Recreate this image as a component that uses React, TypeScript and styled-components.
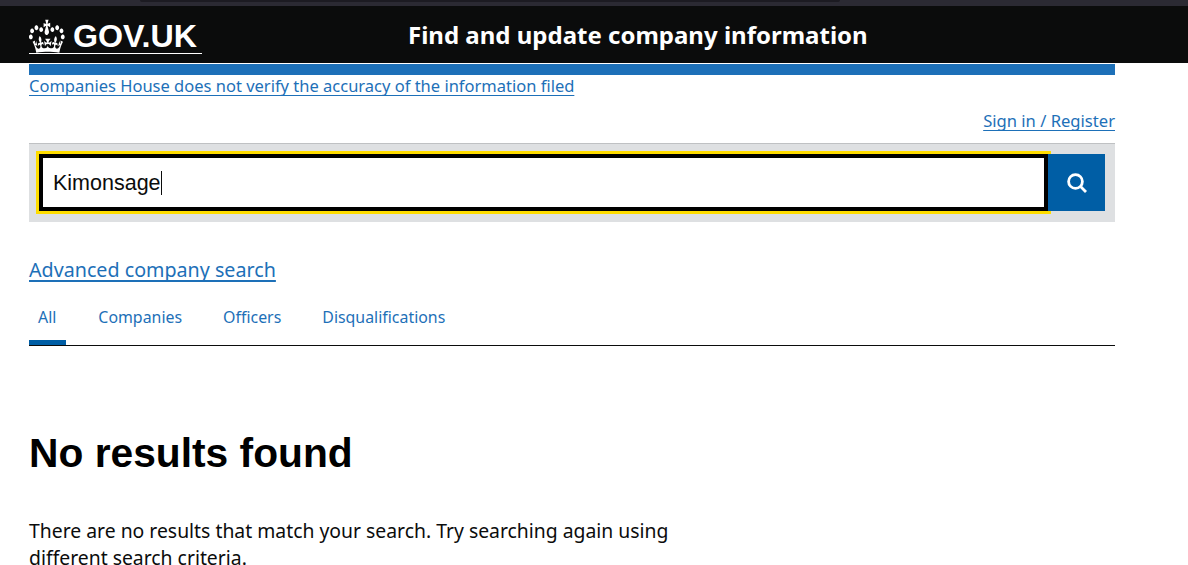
import { createGlobalStyle, styled } from "styled-components";

const GlobalStyle = createGlobalStyle`
	html, body {
		margin: 0;
		padding: 0;
		background: #fff;
		overflow: hidden;
	}
	body {
		font-family: "Noto Sans", sans-serif;
		color: #0b0c0c;
	}
`;

const Page = styled.div`
	width: 1188px;
	height: 565px;
	overflow: hidden;
`;

const TopStrip = styled.div`
	height: 6px;
	background: #2b2a33;
`;

const BrowserTab = styled.div`
	width: 700px;
	height: 2px;
	margin-left: 140px;
	background: #1c1b22;
	border-radius: 0 0 3px 3px;
`;

const Header = styled.header`
	height: 57px;
	background: #0b0c0c;
	padding-left: 29px;
	display: flex;
	align-items: center;
	margin-bottom: 1px;
`;

const LogoLink = styled.a`
	width: 173px;
	height: 36px;
	display: flex;
	align-items: center;
	gap: 8px;
	color: #fff;
	border-bottom: 1px solid #fff;
	box-sizing: border-box;
	margin-top: 3px;
`;

const LogoText = styled.span`
	font-family: "Liberation Sans", sans-serif;
	font-weight: 700;
	font-size: 32.2px;
	line-height: 36px;
`;

const ServiceName = styled.div`
	margin-left: 206px;
	color: #fff;
	font-weight: 700;
	font-size: 24px;
	line-height: 36px;
	font-family: "Noto Sans", sans-serif;
`;

const Wrapper = styled.main`
	width: 1086px;
	margin-left: 29px;
`;

const BlueBar = styled.div`
	height: 11px;
	background: #1d70b8;
`;

const Notice = styled.a`
	display: block;
	width: fit-content;
	color: #1d70b8;
	font-size: 16.5px;
	line-height: 21px;
	text-decoration: underline;
	text-decoration-skip-ink: none;
	text-underline-offset: 3px;
`;

const AccountRow = styled.div`
	display: flex;
	justify-content: flex-end;
	margin-top: 14px;
`;

const AccountLink = styled(Notice)`
	font-size: 16.6px;
`;

const SearchPanel = styled.form`
	margin-top: 12px;
	height: 79px;
	box-sizing: border-box;
	border-top: 1px solid #bfc1c3;
	background: #dee0e2;
	padding: 10px 10px 11px 10px;
	display: flex;
`;

const SearchInput = styled.div`
	flex: 1;
	box-sizing: border-box;
	height: 57px;
	border: 4px solid #000;
	outline: 3px solid #ffdd00;
	background: #fff;
	padding: 1px 0 0 10px;
	font-family: "Liberation Sans", sans-serif;
	font-size: 21.5px;
	display: flex;
	align-items: center;
	color: #0b0c0c;
`;

const Caret = styled.span`
	width: 1px;
	height: 24px;
	background: #0b0c0c;
`;

const SearchButton = styled.button`
	position: relative;
	width: 57px;
	height: 57px;
	border: 0;
	padding: 0;
	background: #005ea5;
	display: flex;
	align-items: center;
	justify-content: center;
`;

const AdvancedLink = styled(Notice)`
	margin-top: 35px;
	font-size: 19.7px;
	line-height: 26px;
	text-decoration-thickness: 2px;
`;

const Tabs = styled.nav`
	margin-top: 19px;
	height: 43px;
	border-bottom: 1px solid #0b0c0c;
	display: flex;
	gap: 41px;
`;

const Tab = styled.a<{ $active?: boolean }>`
	height: 43px;
	box-sizing: border-box;
	padding: 3px ${(p) => (p.$active ? "10px" : "0")} 0 ${(p) => (p.$active ? "9px" : "0")};
	margin-right: ${(p) => (p.$active ? "-9px" : "0")};
	border-bottom: ${(p) => (p.$active ? "5px solid #005ea5" : "0")};
	color: #1d70b8;
	font-size: 15.9px;
	line-height: 24px;
`;

const Heading = styled.h1`
	margin: 84px 0 0;
	font-family: "Liberation Sans", sans-serif;
	font-weight: 700;
	font-size: 40.75px;
	line-height: 46px;
	color: #000;
`;

const Body = styled.p`
	margin: 41px 0 0;
	width: 680px;
	font-size: 19.36px;
	line-height: 27px;
	color: #0b0c0c;
`;

function Crown() {
	return (
		<svg width="36" height="34" viewBox="0 3.500 36 27" preserveAspectRatio="none" fill="#fff">
			<path d="M6.700 12.200c1 .4 2.100-.1 2.500-1s-.1-2.100-1-2.500c-1-.4-2.100.1-2.500 1-.4 1 0 2.100 1 2.500m-4.300 2.500c1 .4 2.100-.1 2.500-1s-.1-2.100-1-2.500c-1-.4-2.100.1-2.500 1-.5 1 0 2.100 1 2.500m-1.300 4.800c1 .4 2.100-.1 2.500-1 .4-1-.1-2.100-1-2.500-1-.4-2.100.1-2.500 1-.4 1 0 2.100 1 2.500m10.400-5.800c1 .4 2.100-.1 2.500-1s-.1-2.100-1-2.500c-1-.4-2.100.1-2.500 1s0 2.100 1 2.500m17.400-1.500c-1 .4-2.100-.1-2.500-1s.1-2.100 1-2.500c1-.4 2.100.1 2.500 1 .5 1 0 2.100-1 2.500m4.300 2.500c-1 .4-2.100-.1-2.500-1s.1-2.100 1-2.500c1-.4 2.100.1 2.500 1 .5 1 0 2.100-1 2.500m1.300 4.800c-1 .4-2.100-.1-2.500-1-.4-1 .1-2.100 1-2.500 1-.4 2.100.1 2.500 1 .4 1 0 2.100-1 2.500m-10.400-5.800c-1 .4-2.100-.1-2.500-1s.1-2.100 1-2.500c1-.4 2.100.1 2.500 1s0 2.100-1 2.500m-5.300-4.900 2.400 1.300V6.500l-2.400.8c-.1-.1-.1-.2-.2-.2s1-3 1-3h-3.400l1 3c-.1.1-.2.1-.2.2-.1.1-2.400-.7-2.400-.7v3.500L17 8.800c-.1.1 0 .2.1.3l-1.400 4.200c-.1.2-.1.4-.1.7 0 1.100.8 2.100 1.900 2.200h.6C19.200 16 20 15 20 13.900c0-.3 0-.5-.1-.7l-1.400-4.200c.2-.1.3-.2.3-.3" />
			<path d="M18 29.500c4.400 0 8.600.3 12.300.8 1.100-4.500 2.400-7 3.700-8.800l-2.500-.9c.2 1.300.3 1.900 0 2.700-.4-.4-.8-1.100-1.100-2.300l-1.200 4c.7-.5 1.300-.8 2-.9-1.200 2.500-2.600 3.100-3.500 3-1.100-.2-1.700-1.200-1.500-2.100.3-1.200 1.500-1.500 2.100-.1 1.100-2.300-.8-3-2-2.300 1.900-1.900 2.100-3.500.6-5.600-2.100 1.600-2.100 3.200-1.200 5.500-1.200-1.400-3.200-.6-2.500 1.600.9-1.400 2.100-.5 1.900.8-.2 1.100-1.700 2.100-3.500 1.900-2.700-.2-2.900-2.100-2.900-3.600.7-.1 1.900.5 2.900 1.900l1-4.300c-1.100 1.100-2.100 1.400-3.200 1.400.4-1.200 2.100-3 2.100-3h-5.400s1.700 1.900 2.100 3c-1.100 0-2.100-.2-3.200-1.400l1 4.300c1-1.400 2.200-2 2.900-1.900-.1 1.500-.2 3.400-2.900 3.600-1.900.2-3.400-.8-3.500-1.900-.2-1.300 1-2.200 1.900-.8.7-2.300-1.200-3-2.500-1.600.9-2.200.9-3.900-1.200-5.500-1.500 2-1.300 3.700.6 5.600-1.200-.7-3.100 0-2 2.300.6-1.400 1.800-1.100 2.100.1.2.9-.3 1.900-1.500 2.100-.9.2-2.300-.5-3.500-3 .6 0 1.200.3 2 .9l-1.200-4c-.3 1.100-.7 1.900-1.100 2.300-.3-.8-.2-1.400 0-2.700l-2.500.9c1.300 1.900 2.700 4.300 3.700 8.800 3.700-.5 7.900-.8 12.300-.8" />
		</svg>
	);
}

export default function App() {
	return (
		<Page>
			<GlobalStyle />
			<TopStrip>
				<BrowserTab />
			</TopStrip>
			<Header>
				<LogoLink>
					<Crown />
					<LogoText>GOV.UK</LogoText>
				</LogoLink>
				<ServiceName>Find and update company information</ServiceName>
			</Header>
			<Wrapper>
				<BlueBar />
				<Notice>Companies House does not verify the accuracy of the information filed</Notice>
				<AccountRow>
					<AccountLink>Sign in / Register</AccountLink>
				</AccountRow>
				<SearchPanel>
					<SearchInput>
						Kimonsage
						<Caret />
					</SearchInput>
					<SearchButton type="button" aria-label="Search">
						<svg width="20" height="20" viewBox="0 0 20 20" fill="none" stroke="#fff">
							<circle cx="8.500" cy="8.500" r="6.900" strokeWidth="2.800" />
							<path d="M13.800 13.800L19 19" strokeWidth="2.800" />
						</svg>
					</SearchButton>
				</SearchPanel>
				<AdvancedLink>Advanced company search</AdvancedLink>
				<Tabs>
					<Tab $active>All</Tab>
					<Tab>Companies</Tab>
					<Tab>Officers</Tab>
					<Tab>Disqualifications</Tab>
				</Tabs>
				<Heading>No results found</Heading>
				<Body>There are no results that match your search. Try searching again using different search criteria.</Body>
			</Wrapper>
		</Page>
	);
}
